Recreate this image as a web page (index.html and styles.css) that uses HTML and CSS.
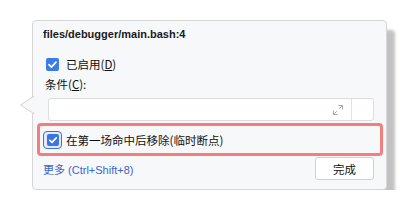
FILE: index.html
```html
<!DOCTYPE html>
<html lang="zh">
<head>
<meta charset="utf-8">
<title>断点</title>
<link rel="stylesheet" href="styles.css">
</head>
<body>
<div class="stage">
  <div class="popup">
    <svg class="arrow" width="14" height="18" viewBox="0 0 14 18">
      <polygon points="13.5,0.5 0.5,9 13.5,17.5" fill="#f7f8fa" stroke="#d2d2d4" stroke-width="1"/>
      <rect x="12.5" y="1.5" width="2" height="15" fill="#f7f8fa"/>
    </svg>
    <div class="title">files/debugger/main.bash:4</div>
    <div class="check-row">
      <span class="cb"><svg width="13" height="13" viewBox="0 0 13 13"><path d="M3 6.7 L5.4 9.1 L10 4.2" fill="none" stroke="#fff" stroke-width="1.7" stroke-linecap="round" stroke-linejoin="round"/></svg></span>
      <span class="label">已启用(<u>D</u>)</span>
    </div>
    <div class="cond-label">条件(<u>C</u>):</div>
    <div class="input">
      <div class="input-main">
        <svg class="resize" width="12" height="12" viewBox="0 0 12 12"><path d="M1.5 10.5 L4.8 7.2 M7.2 4.8 L10.5 1.5 M6.5 1.5 H10.5 V5.5 M1.5 6.5 V10.5 H5.5" fill="none" stroke="#a8a8ba" stroke-width="1"/></svg>
      </div>
      <div class="input-side"></div>
    </div>
    <div class="focus-row">
      <span class="cb-focus"><span class="cb cb-inner"><svg width="12" height="12" viewBox="0 0 12 12"><path d="M2.8 6.2 L5 8.4 L9.3 3.9" fill="none" stroke="#fff" stroke-width="1.6" stroke-linecap="round" stroke-linejoin="round"/></svg></span></span>
      <span class="label">在第一场命中后移除(临时断点)</span>
    </div>
    <div class="footer">
      <a class="more" href="#"><span class="more-cjk">更多</span> (Ctrl+Shift+8)</a>
      <button class="done" type="button">完成</button>
    </div>
  </div>
</div>
</body>
</html>
```
FILE: styles.css
```css
html, body {
  margin: 0;
  padding: 0;
  background: #ffffff;
}
body {
  font-family: "Liberation Sans", "Noto Sans CJK SC", sans-serif;
  color: #111;
}
.stage {
  padding: 20px 0 0 32px;
}
.popup {
  position: relative;
  box-sizing: border-box;
  width: 355px;
  height: 170px;
  background: #f7f8fa;
  border: 1px solid #d6d6d8;
  border-radius: 4px;
  box-shadow: 8px 10px 3px rgba(0, 0, 0, 0.24);
  padding: 6px 12px 9px 10px;
  display: flex;
  flex-direction: column;
}
.arrow {
  position: absolute;
  left: -13px;
  top: 75px;
}
.title {
  height: 14px;
  line-height: 14px;
  font-size: 11px;
  font-weight: bold;
  color: #1a1a1a;
  white-space: nowrap;
}
.check-row {
  margin-top: 15px;
  height: 16px;
  display: flex;
  align-items: center;
  padding-left: 3px;
}
.cb {
  width: 13px;
  height: 13px;
  border-radius: 2px;
  background: #3b7be9;
  display: flex;
  flex: none;
}
.label {
  font-size: 11.5px;
  line-height: 16px;
  margin-left: 7px;
  font-family: "Noto Sans CJK SC", "Liberation Sans", sans-serif;
  white-space: nowrap;
}
.label u, .cond-label u {
  text-underline-offset: 1px;
}
.cond-label {
  margin-top: 5px;
  height: 15px;
  line-height: 15px;
  font-size: 11.5px;
  padding-left: 2px;
  font-family: "Noto Sans CJK SC", "Liberation Sans", sans-serif;
}
.input {
  margin-top: 6px;
  margin-left: 5px;
  height: 23px;
  box-sizing: border-box;
  background: #fff;
  border: 1px solid #dcdde0;
  border-radius: 3px;
  display: flex;
}
.input-main {
  flex: 1;
  display: flex;
  align-items: center;
  justify-content: flex-end;
  padding-right: 7px;
}
.input-side {
  width: 21px;
  border-left: 1px solid #e2e3e6;
}
.focus-row {
  margin: 2px -9px 0 -6px;
  height: 33px;
  box-sizing: border-box;
  border: 3px solid #f47e7e;
  border-radius: 4px;
  display: flex;
  align-items: center;
  padding-left: 3px;
}
.cb-focus {
  width: 19px;
  height: 18px;
  box-sizing: border-box;
  border: 1.5px solid #3b6fdc;
  border-radius: 4px;
  background: #e4ecfb;
  display: flex;
  align-items: center;
  justify-content: center;
  flex: none;
}
.cb-inner {
  width: 12px;
  height: 12px;
  border-radius: 2px;
  background: #3b74e3;
}
.focus-row .label {
  margin-left: 4px;
}
.footer {
  margin-top: 1px;
  height: 23px;
  display: flex;
  align-items: center;
  justify-content: space-between;
}
.more {
  font-size: 11px;
  color: #3a66c8;
  text-decoration: none;
  white-space: nowrap;
  font-family: "Liberation Sans", "Noto Sans CJK SC", sans-serif;
}
.more-cjk {
  font-size: 11px;
  font-family: "Noto Sans CJK SC", sans-serif;
}
.done {
  width: 59px;
  height: 23px;
  box-sizing: border-box;
  background: #fff;
  border: 1px solid #cfd0d4;
  border-radius: 3px;
  font-family: "Noto Sans CJK SC", sans-serif;
  font-size: 11.5px;
  color: #111;
  padding: 0;
}
```
